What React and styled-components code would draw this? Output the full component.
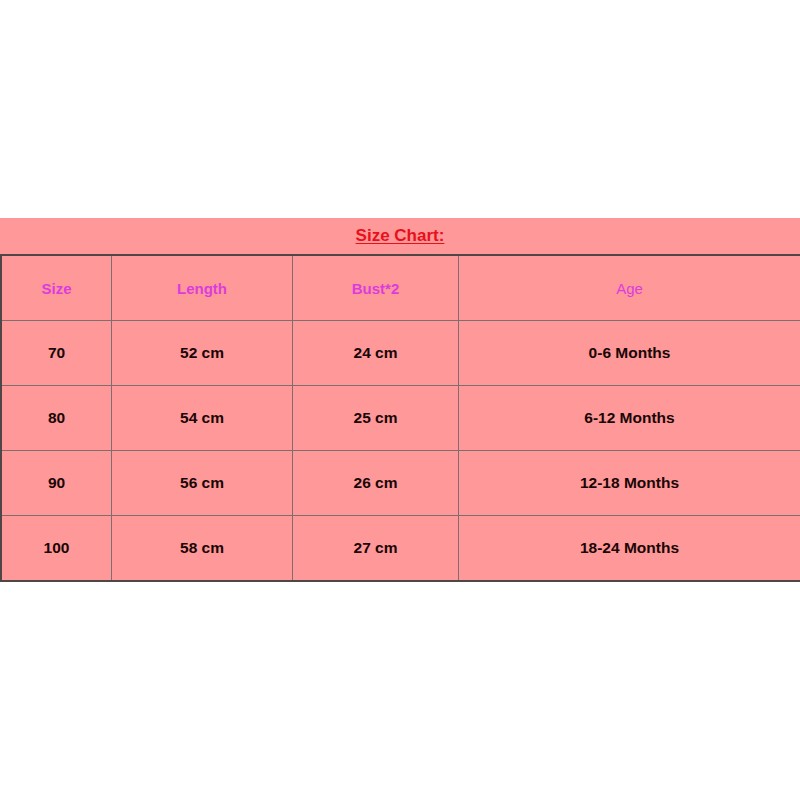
import React from "react";
import styled, { createGlobalStyle } from "styled-components";

const GlobalStyle = createGlobalStyle`
  body {
    margin: 0;
    background: #ffffff;
    font-family: "Liberation Sans", Arial, sans-serif;
  }
`;

const Page = styled.div`
  width: 800px;
  height: 800px;
  padding-top: 218px;
  box-sizing: border-box;
  overflow: hidden;
`;

const Chart = styled.section`
  background: #fe9899;
  width: 800px;
`;

const Title = styled.h2`
  margin: 0;
  height: 36px;
  display: flex;
  align-items: center;
  justify-content: center;
  font-size: 17px;
  font-weight: 700;
  color: #e8101a;
  text-decoration: underline;
  text-underline-offset: 2px;
`;

const Grid = styled.div`
  display: grid;
  grid-template-columns: 110px 181px 166px 341px;
  border-top: 2px solid #4f4646;
  border-bottom: 2px solid #4f4646;
  border-left: 2px solid #4f4646;
`;

const Cell = styled.div`
  height: 64px;
  display: flex;
  align-items: center;
  justify-content: center;
  font-size: ${(p) => (p.$head ? 15 : 15.5)}px;
  font-weight: ${(p) => (p.$light ? 400 : 700)};
  color: ${(p) => (p.$head ? "#dc3cdc" : "#1a0606")};
  border-right: ${(p) => (p.$last ? "none" : "1px solid #7d6f6f")};
  border-bottom: ${(p) => (p.$bottom ? "none" : "1px solid #7d6f6f")};
`;

const head = ["Size", "Length", "Bust*2", "Age"];
const rows = [
  ["70", "52 cm", "24 cm", "0-6 Months"],
  ["80", "54 cm", "25 cm", "6-12 Months"],
  ["90", "56 cm", "26 cm", "12-18 Months"],
  ["100", "58 cm", "27 cm", "18-24 Months"],
];

const App = () => {
  return (
    <Page>
      <GlobalStyle />
      <Chart>
        <Title>Size Chart:</Title>
        <Grid>
          {head.map((h, i) => (
            <Cell key={h} $head $last={i === 3} $light={i === 3}>
              {h}
            </Cell>
          ))}
          {rows.map((r, ri) =>
            r.map((c, ci) => (
              <Cell
                key={ri + "-" + ci}
                $last={ci === 3}
                $bottom={ri === rows.length - 1}
              >
                {c}
              </Cell>
            ))
          )}
        </Grid>
      </Chart>
    </Page>
  );
};

export default App;
